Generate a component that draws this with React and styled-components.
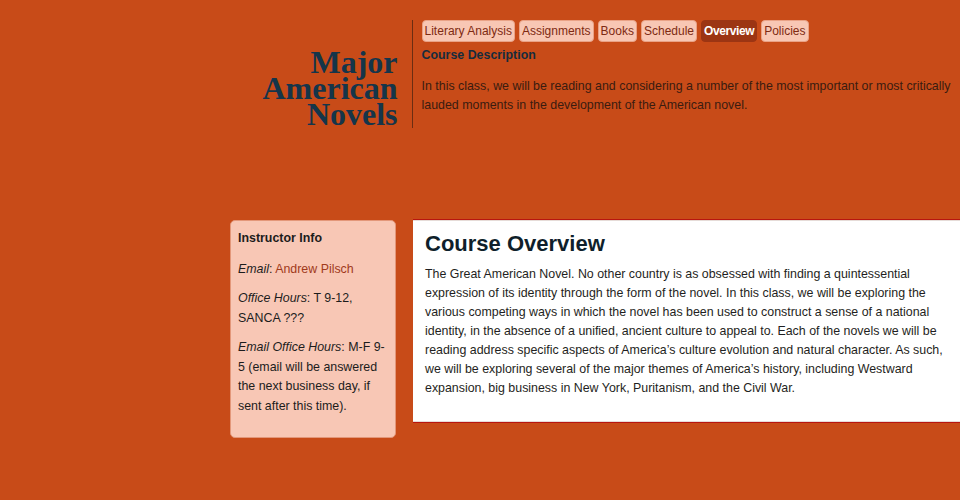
import React from "react";
import styled, { createGlobalStyle } from "styled-components";

const GlobalStyle = createGlobalStyle`
  html, body {
    margin: 0;
    padding: 0;
    overflow: hidden;
    background-color: #c84b18;
    font-family: "Liberation Sans", Arial, sans-serif;
  }
`;

const tabs = [
  "Literary Analysis",
  "Assignments",
  "Books",
  "Schedule",
  "Overview",
  "Policies",
];

export default function App() {
  return (
    <>
      <GlobalStyle />
      <Page>
        <Header>
          <Title>
            Major
            <br />
            American
            <br />
            Novels
          </Title>
          <NavColumn>
            <Tabs>
              {tabs.map((tab) => (
                <Tab key={tab} $active={tab === "Overview"}>
                  {tab}
                </Tab>
              ))}
            </Tabs>
            <DescTitle>Course Description</DescTitle>
            <DescText>
              In this class, we will be reading and considering a number of the
              most important or most critically lauded moments in the
              development of the American novel.
            </DescText>
          </NavColumn>
        </Header>

        <Body>
          <Sidebar>
            <SideTitle>Instructor Info</SideTitle>
            <SideText>
              <em>Email</em>: <a href="#">Andrew Pilsch</a>
            </SideText>
            <SideText>
              <em>Office Hours</em>: T 9-12, SANCA ???
            </SideText>
            <SideText>
              <em>Email Office Hours</em>: M-F 9-5 (email will be answered the
              next business day, if sent after this time).
            </SideText>
          </Sidebar>

          <Main>
            <MainTitle>Course Overview</MainTitle>
            <MainText>
              The Great American Novel. No other country is as obsessed with
              finding a quintessential expression of its identity through the
              form of the novel. In this class, we will be exploring the various
              competing ways in which the novel has been used to construct a
              sense of a national identity, in the absence of a unified, ancient
              culture to appeal to. Each of the novels we will be reading
              address specific aspects of America’s culture evolution and
              natural character. As such, we will be exploring several of the
              major themes of America’s history, including Westward expansion,
              big business in New York, Puritanism, and the Civil War.
            </MainText>
          </Main>
        </Body>
      </Page>
    </>
  );
}

const Page = styled.div`
  width: 960px;
  height: 500px;
  padding-top: 20px;
  box-sizing: border-box;
`;

const Header = styled.header`
  display: flex;
  align-items: flex-end;
  margin-left: 230px;
`;

const Title = styled.h1`
  width: 168px;
  margin: 0 14px 1px 0;
  text-align: right;
  font-family: "Liberation Serif", "Times New Roman", serif;
  font-weight: 700;
  font-size: 32px;
  line-height: 26px;
  color: #15354a;
`;

const NavColumn = styled.div`
  border-left: 1px solid #6b2d12;
  padding: 0 0 13px 9px;
  width: 540px;
`;

const Tabs = styled.nav`
  display: flex;
  gap: 4px;
`;

const Tab = styled.a`
  display: block;
  height: 22px;
  box-sizing: border-box;
  padding: 0 2px;
  border-radius: 4px;
  border: 1px solid ${(p) => (p.$active ? "#9c3513" : "#e9a286")};
  background-color: ${(p) => (p.$active ? "#9c3513" : "#f8c7b4")};
  color: ${(p) => (p.$active ? "#ffffff" : "#7e2a12")};
  font-size: 12px;
  font-weight: ${(p) => (p.$active ? 700 : 400)};
  line-height: 20px;
  letter-spacing: ${(p) => (p.$active ? "-0.4px" : "0")};
  cursor: pointer;
`;

const DescTitle = styled.h3`
  margin: 4px 0 13px;
  font-size: 12.4px;
  line-height: 18px;
  font-weight: 700;
  color: #152c3d;
`;

const DescText = styled.p`
  margin: 0;
  font-size: 12.4px;
  line-height: 19px;
  color: #3a1c10;
`;

const Body = styled.section`
  display: flex;
  align-items: flex-start;
  gap: 17px;
  margin: 91px 0 0 230px;
`;

const Sidebar = styled.aside`
  width: 166px;
  flex-shrink: 0;
  box-sizing: border-box;
  margin-top: 1px;
  padding: 8px 7px 11px;
  background-color: #f8c7b5;
  border: 1px solid #e3977a;
  border-radius: 5px;
  color: #1c1c1c;
  font-size: 12.4px;
  line-height: 19.5px;

  a {
    color: #a13a1c;
    text-decoration: none;
  }
`;

const SideTitle = styled.h4`
  margin: 0 0 11px;
  font-size: 12.4px;
  line-height: 19.5px;
  font-weight: 700;
`;

const SideText = styled.p`
  margin: 0 0 10px;
`;

const Main = styled.main`
  width: 556px;
  flex-shrink: 0;
  box-sizing: border-box;
  background-color: #ffffff;
  border-top: 1px solid #b8150f;
  border-bottom: 1px solid #b8150f;
  box-shadow: inset 0 1px 0 #e6dcd8, inset 0 -1px 0 #e6dcd8;
  padding: 11px 12px 24px;
`;

const MainTitle = styled.h2`
  margin: 0 0 8px;
  font-size: 22px;
  line-height: 26px;
  font-weight: 700;
  color: #0f1f2b;
`;

const MainText = styled.p`
  margin: 0;
  font-size: 12.4px;
  line-height: 19px;
  color: #1f1f22;
`;
